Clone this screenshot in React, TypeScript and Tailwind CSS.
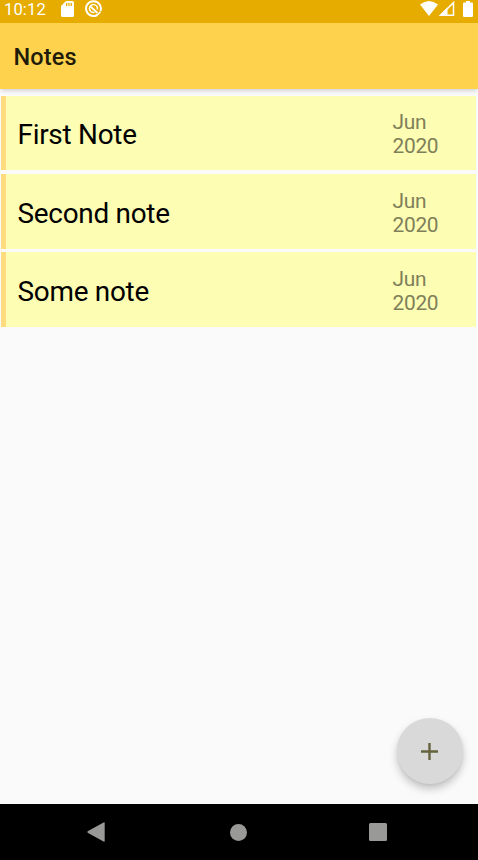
const notes = [
  { title: 'First Note', month: 'Jun', year: '2020' },
  { title: 'Second note', month: 'Jun', year: '2020' },
  { title: 'Some note', month: 'Jun', year: '2020' },
];

function StatusBar() {
  return (
    <div className="flex h-[23px] shrink-0 items-start bg-[#e6ac00] text-white">
      <span className="w-[61px] pl-[4px] text-[16.6px] leading-[19px] tracking-[0.1px]">10:12</span>
      <svg className="mt-[1px] h-[16px] w-[13px]" viewBox="0 0 13 16" fill="currentColor">
        <path
          fillRule="evenodd"
          d="M5 0h6.5Q13 0 13 1.5v13Q13 16 11.5 16h-10Q0 16 0 14.5V5zM5 2v3h1.300V2zM7.300 2v3h1.300V2zM9.600 2v3h1.300V2z"
        />
      </svg>
      <svg className="ml-[11px] h-[17px] w-[17px]" viewBox="0 0 17 17" fill="none" stroke="currentColor">
        <path d="M12.500 14.800A7.400 7.400 0 1 1 15.400 11.200" strokeWidth="2" />
        <path d="M9.500 12.400A4 4 0 0 1 4.900 6.700A4 4 0 0 1 12.300 9.500" strokeWidth="1.500" />
        <path d="M5.500 6.500L12.500 13" strokeWidth="1.900" />
        <path d="M12.300 15L15.500 11.800" strokeWidth="1.600" />
      </svg>
      <svg className="ml-auto mr-[1px] mt-px h-[15px] w-[18px]" viewBox="0 0 18 15" fill="currentColor">
        <path d="M0 3.500Q9-3.500 18 3.500L9 15z" />
      </svg>
      <svg className="mr-[8px] mt-px h-[15px] w-[16px]" viewBox="0 0 16 15">
        <path d="M1.500 14.300L14.500 1.600V14.300z" fill="none" stroke="currentColor" strokeWidth="1.500" />
        <path d="M0 15L8.500 6.500V15z" fill="currentColor" />
      </svg>
      <svg className="mr-[5px] mt-px h-[16px] w-[10px]" viewBox="0 0 10 16" fill="currentColor">
        <path d="M3 0h4v1.500h2q1 0 1 1V15q0 1-1 1H1q-1 0-1-1V2.500q0-1 1-1h2z" />
      </svg>
    </div>
  );
}

function NoteRow({ title, month, year }: { title: string; month: string; year: string }) {
  return (
    <li className="flex h-[74.800px] items-center border-l-[5px] border-[#ffdc80] bg-[#fdfdb3]">
      <span className="flex-1 pl-[11.500px] pt-[3.600px] text-[27.900px] leading-[33px] tracking-[-0.260px] text-black">
        {title}
      </span>
      <span className="w-[83.500px] pt-[2.600px] text-[20.900px] leading-[24px] tracking-[-0.300px] text-[#7f7f5a]">
        {month}
        <br />
        {year}
      </span>
    </li>
  );
}

function NavBar() {
  return (
    <nav className="flex h-[56px] shrink-0 items-center justify-between bg-black pl-[87px] pr-[91px] text-[#999997]">
      <svg className="h-[20px] w-[18px]" viewBox="0 0 18 20" fill="currentColor">
        <path d="M.7 9.300L16.500.4Q17.700 0 17.700 1V19Q17.700 20 16.500 19.500L.7 10.700Q0 10 .7 9.300z" />
      </svg>
      <span className="ml-[2px] size-[17px] rounded-full bg-[#999997]" />
      <span className="size-[18px] rounded-[1.500px] bg-[#999997]" />
    </nav>
  );
}

export default function App() {
  return (
    <div className="flex h-[860px] w-[478px] flex-col overflow-hidden bg-[#fafafa] font-['Roboto',sans-serif]">
      <StatusBar />
      <header className="flex h-[66px] shrink-0 items-center bg-[#ffd24d] pl-[13.500px] pt-[2px] shadow-[0_3px_4px_-1px_rgba(0,0,0,0.15)]">
        <h1 className="text-[23.500px] font-medium leading-[28px] tracking-[0.150px] text-[#211b0a]">Notes</h1>
      </header>
      <main className="flex flex-1 flex-col pl-px pr-[2px] pt-[6.600px]">
        <ul className="flex flex-col gap-[3.600px]">
          {notes.map((note) => (
            <NoteRow key={note.title} {...note} />
          ))}
        </ul>
        <button
          aria-label="Add note"
          className="mb-[20px] mr-[13px] mt-auto flex size-[66px] items-center justify-center self-end rounded-full bg-[#d9d9d9] pr-px shadow-[0_5px_8px_rgba(0,0,0,0.22),0_1px_3px_rgba(0,0,0,0.06)]"
        >
          <svg className="size-[17px]" viewBox="0 0 17 17" fill="none" stroke="#66633f" strokeWidth="2.400">
            <path d="M8.500 0V17M0 8.500H17" />
          </svg>
        </button>
      </main>
      <NavBar />
    </div>
  );
}
